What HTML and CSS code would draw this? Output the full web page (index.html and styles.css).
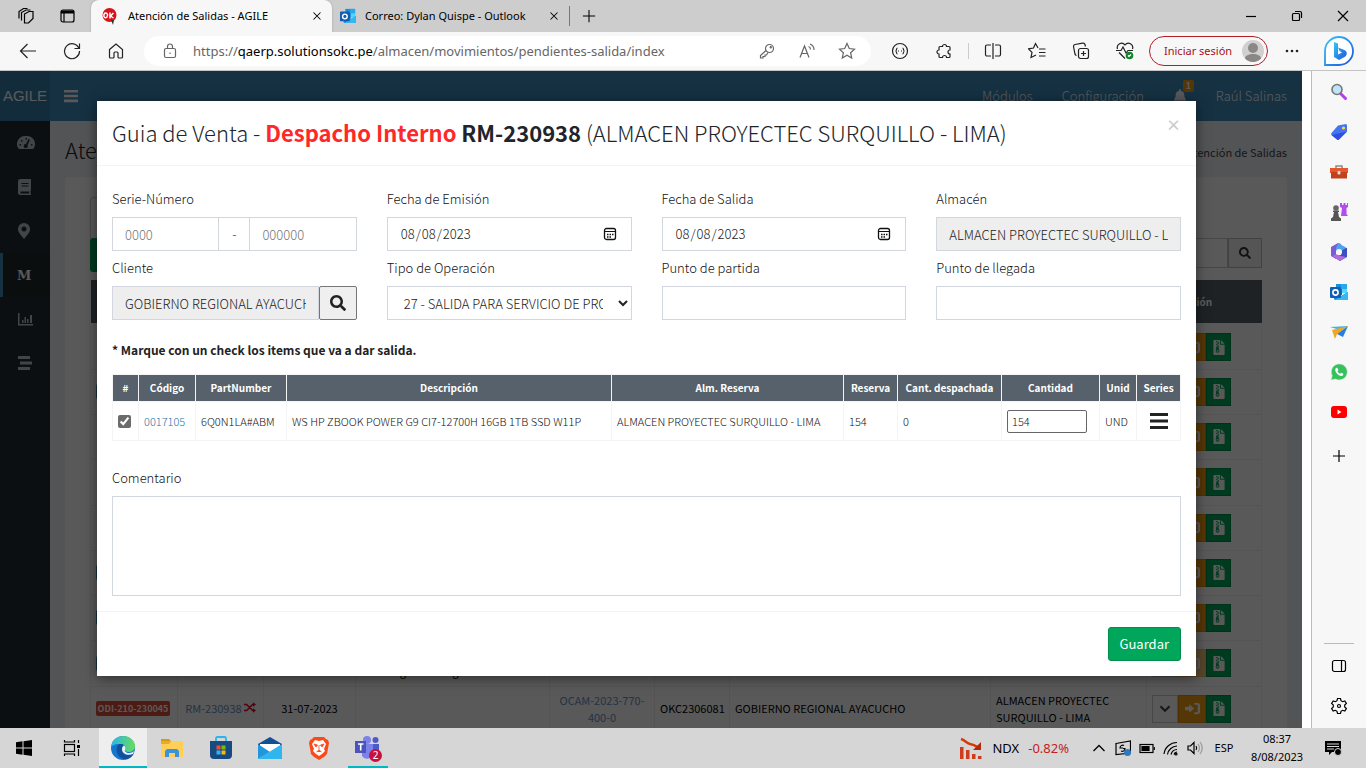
FILE: index.html
```html
<!DOCTYPE html>
<html lang="es">
<head>
<meta charset="utf-8">
<meta name="viewport" content="width=device-width, initial-scale=1">
<title>Atención de Salidas - AGILE</title>
<link rel="stylesheet" href="styles.css">
</head>
<body>
<svg class="defs" aria-hidden="true">
  <symbol id="i-close" viewBox="0 0 16 16"><path d="M4 4l8 8M12 4l-8 8"/></symbol>
  <symbol id="i-plus" viewBox="0 0 16 16"><path d="M8 1v14M1 8h14"/></symbol>
  <symbol id="i-search" viewBox="0 0 512 512"><path d="M505 442.700L405.300 343c-4.500-4.500-10.600-7-17-7H372c27.600-35.300 44-79.700 44-128C416 93.100 322.900 0 208 0S0 93.100 0 208s93.100 208 208 208c48.300 0 92.700-16.400 128-44v16.300c0 6.400 2.500 12.500 7 17l99.700 99.700c9.400 9.400 24.600 9.400 33.900 0l28.300-28.300c9.400-9.400 9.400-24.600.1-34zM208 336c-70.700 0-128-57.200-128-128 0-70.700 57.200-128 128-128 70.700 0 128 57.200 128 128 0 70.700-57.200 128-128 128z"/></symbol>
  <symbol id="i-bars" viewBox="0 0 16 16"><path d="M0 1h16v3H0zM0 6.500h16v3H0zM0 12h16v3H0z"/></symbol>
  <symbol id="i-zip" viewBox="0 0 12 16"><path fill-rule="evenodd" d="M1 0h6v5h5v10a1 1 0 0 1-1 1H1a1 1 0 0 1-1-1V1a1 1 0 0 1 1-1zM8 0l4 4H8zM3 1v1.500h1.500V1zM4.500 2.500V4H6V2.500zM3 4v1.500h1.500V4zM4.500 5.500V7H6V5.500zM3 7v1.500L2.500 11.500a2 2 0 1 0 4 0L5.500 8.500V7zM3.500 11h2v1.200h-2z"/></symbol>
  <symbol id="i-signin" viewBox="0 0 16 14"><path d="M0 5.200h4.500V2.400L9.800 7l-5.300 4.600V8.800H0zM10 1h3.500A2.500 2.500 0 0 1 16 3.500v7a2.500 2.500 0 0 1-2.500 2.500H10v-2h3.500V3H10z"/></symbol>
  <symbol id="i-down" viewBox="0 0 16 16"><path d="M2 5l6 6 6-6" fill="none" stroke="currentColor" stroke-width="2.800"/></symbol>
  <symbol id="i-shuffle" viewBox="0 0 16 14"><path d="M0 3h3.500l8 8H13M0 11h3.500l8-8H13" fill="none" stroke="currentColor" stroke-width="2"/><path d="M12 0l4 3-4 3zM12 8l4 3-4 3z"/></symbol>
  <symbol id="i-outlook" viewBox="0 0 18 18"><path fill="#1490df" d="M6 1h11v9H6z"/><path fill="#28a8ea" d="M11 1h6v5h-6z"/><path fill="#0f6cbd" d="M6 6h6v6H6z"/><path fill="#50d9ff" d="M12 6h5v4h-5z"/><path fill="#1a86d9" d="M4 16V9l7 4 7-4v7a1 1 0 0 1-1 1H5z"/><path fill="#35b8f1" d="M5 17l13-8v7a1 1 0 0 1-1 1z"/><rect width="11" height="11" y="4" rx="1" fill="#0f5fb5"/><circle cx="5.500" cy="9.500" r="2.600" fill="none" stroke="#fff" stroke-width="1.600"/></symbol>
</svg>

<header class="tabs">
  <button class="tabs-tool" aria-label="Áreas de trabajo"><svg class="line s18" viewBox="0 0 18 18"><path d="M7.500 7l4.500-2.500h4v7L11.500 16h-4zM4.500 13.500v-8L9 3h4.500M2 11.500v-7L6.500 1.500h4"/></svg></button>
  <button class="tabs-tool" aria-label="Menú de pestañas"><svg class="line s18" viewBox="0 0 18 18"><rect x="2" y="3" width="13" height="12" rx="2"/><path d="M2 5h13" stroke-width="3"/><path d="M5 6v9"/></svg></button>
  <div class="tab tab-active">
    <svg class="s18" viewBox="0 0 18 18"><circle cx="8.500" cy="8" r="7" fill="#d8121b"/><path d="M10 13l2 5 1-5z" fill="#333"/><path d="M3 9.500c-1-5 4-4 3.500-1S3.500 11 3 9.500zM9 5.500v6M12.500 6L9.500 9l3 2" fill="none" stroke="#fff" stroke-width="1.500"/></svg>
    <span class="tab-title">Atención de Salidas - AGILE</span>
    <button aria-label="Cerrar pestaña"><svg class="line s14"><use href="#i-close"/></svg></button>
  </div>
  <div class="tab">
    <svg class="s16"><use href="#i-outlook"/></svg>
    <span class="tab-title">Correo: Dylan Quispe - Outlook</span>
    <button aria-label="Cerrar pestaña"><svg class="line s14"><use href="#i-close"/></svg></button>
  </div>
  <button class="tab-new" aria-label="Nueva pestaña"><svg class="line s14"><use href="#i-plus"/></svg></button>
  <div class="window-controls">
    <button aria-label="Minimizar"><svg class="line s12" viewBox="0 0 12 12"><path d="M1 6.500h10"/></svg></button>
    <button aria-label="Restaurar"><svg class="line s12" viewBox="0 0 12 12"><rect x="1.500" y="3.500" width="7" height="7" rx="1"/><path d="M4 1.500h5a1.500 1.500 0 0 1 1.500 1.500v5"/></svg></button>
    <button aria-label="Cerrar"><svg class="line s12" viewBox="0 0 12 12"><path d="M1 1l10 10M11 1L1 11"/></svg></button>
  </div>
</header>

<div class="toolbar">
  <button class="tool" aria-label="Atrás"><svg class="line s18" viewBox="0 0 18 18"><path d="M17 9H1.500M8.500 2L1.500 9l7 7"/></svg></button>
  <button class="tool" aria-label="Actualizar"><svg class="line s18" viewBox="0 0 18 18"><path d="M16 6.500A7.500 7.500 0 1 0 16.500 9M16.500 1.500v5h-5"/></svg></button>
  <button class="tool" aria-label="Inicio"><svg class="line s18" viewBox="0 0 18 18"><path d="M2.500 7.500L9 2l6.500 5.500V15a1 1 0 0 1-1 1H12a1 1 0 0 1-1-1v-4a1 1 0 0 0-1-1H8a1 1 0 0 0-1 1v4a1 1 0 0 1-1 1H3.500a1 1 0 0 1-1-1z"/></svg></button>
  <div class="address">
    <svg class="line s16" viewBox="0 0 16 16"><rect x="2.500" y="5.500" width="11" height="9" rx="1.500"/><path d="M5.500 5.500V3.500a2.500 2.500 0 0 1 5 0v2M8 9.500v1.500"/></svg>
    <span class="url">https://<b>qaerp.solutionsokc.pe</b>/almacen/movimientos/pendientes-salida/index</span>
    <button aria-label="Contraseñas"><svg class="line s16" viewBox="0 0 16 16"><circle cx="10.500" cy="5.500" r="4"/><path d="M7 7.500l-5.500 5V15H4v-1.500h2V12h1.500l1.500-2.500"/><circle cx="11.800" cy="4.200" r=".6"/></svg></button>
    <button aria-label="Leer en voz alta"><svg class="line s16" viewBox="0 0 16 16"><path d="M1 14.500L5.500 3 10 14.500M2.500 10.500h6M9.500 3.500c1.500.5 2 2 2 3M11 1c2.500 1 4 3 4 6"/></svg></button>
    <button aria-label="Favorito"><svg class="line s18" viewBox="0 0 18 18"><path d="M9 1.500l2.300 5 5.200.6-3.900 3.600 1.100 5.300L9 13.300 4.300 16l1.100-5.300-3.900-3.600 5.200-.6z"/></svg></button>
  </div>
  <button class="tool" aria-label="Extensión JSON"><svg class="line s18" viewBox="0 0 18 18"><circle cx="9" cy="9" r="7.500"/><path d="M6.500 6C5 6 6 9 4.500 9 6 9 5 12 6.500 12M11.500 6c1.500 0 .5 3 2 3-1.500 0-.5 3-2 3M7 9h1M10 9h1"/></svg></button>
  <button class="tool" aria-label="Extensiones"><svg class="line s18" viewBox="0 0 18 18"><path d="M5 4.500h2.500a2 2 0 1 1 4 0H14a1 1 0 0 1 1 1V8a2 2 0 1 0 0 4v2.500a1 1 0 0 1-1 1h-2.500a2 2 0 1 0-4 0H5a1 1 0 0 1-1-1V12a2 2 0 1 1 0-4V5.500a1 1 0 0 1 1-1z"/></svg></button>
  <span class="tool-sep"></span>
  <button class="tool" aria-label="Pantalla dividida"><svg class="line s18" viewBox="0 0 18 18"><path d="M7 3H3a1.500 1.500 0 0 0-1.500 1.500v8A1.500 1.500 0 0 0 3 14h4M11 3h4a1.500 1.500 0 0 1 1.500 1.500v8A1.500 1.500 0 0 1 15 14h-4M9 1v16"/></svg></button>
  <button class="tool" aria-label="Favoritos"><svg class="line s18" viewBox="0 0 18 18"><path d="M10 6L7.500 1.500 5.500 6l-5 .8 3.500 3.600L3 15.500 8 13M11 7h6.500M11 10.500h6.500M11 14h6.500"/></svg></button>
  <button class="tool" aria-label="Colecciones"><svg class="line s18" viewBox="0 0 18 18"><rect x="6.500" y="6.500" width="10" height="10" rx="2"/><path d="M11.500 9v5M9 11.500h5M4.500 13.500A2 2 0 0 1 3 12L1.500 4.500A2 2 0 0 1 3 2.500l7.500-1.300a2 2 0 0 1 2.500 1.300l.5 2"/></svg></button>
  <button class="tool" aria-label="Rendimiento"><svg class="line s18" viewBox="0 0 18 18"><path d="M1.500 7C0 2.500 6-1 9 3c3-4 9-.5 7.500 4M3 10.500l6 6M0 8.500h5l2-3.500 3 6 2-2.500h5"/><circle cx="13.500" cy="13.500" r="3.800" fill="#13842b" stroke="none"/><path d="M12 13.500l1 1 2-2" stroke="#fff"/></svg></button>
  <button class="signin"><span>Iniciar sesión</span><svg viewBox="0 0 24 24"><circle cx="12" cy="12" r="11" fill="#d2d0ce"/><circle cx="12" cy="9" r="5" fill="#8a8886"/><path d="M4 19.500c0-6 16-6 16 0a11 11 0 0 1-16 0z" fill="#8a8886"/></svg></button>
  <button class="tool" aria-label="Más"><svg class="s18" viewBox="0 0 18 18"><circle cx="4" cy="9" r="1.300"/><circle cx="9" cy="9" r="1.300"/><circle cx="14" cy="9" r="1.300"/></svg></button>
  <button class="bing" aria-label="Bing"><svg viewBox="0 0 32 32"><defs><linearGradient id="g-bing" x1="0" y1="0" x2="1" y2="1"><stop offset="0" stop-color="#35c8f4"/><stop offset="1" stop-color="#1f55dd"/></linearGradient></defs><path d="M2 30V16A14 14 0 1 1 16 30z" fill="#fff" stroke="url(#g-bing)" stroke-width="1.800"/><path d="M11 7l4 1.500v11l4-2-2.500-1.500-1.500-3.500 6.500 2.500c3 1.500 3 5 0 7L16 25l-5-3z" fill="url(#g-bing)"/></svg></button>
</div>

<main class="middle">
  <div class="app">
    <nav class="app-nav">
      <a class="brand" href="#">AGILE</a>
      <button class="menu-toggle" aria-label="Menú"><svg class="s14"><use href="#i-bars"/></svg></button>
      <div class="nav-links">
        <a href="#">Módulos</a>
        <a href="#">Configuración</a>
        <a href="#" class="bell" aria-label="Notificaciones"><svg class="s14" viewBox="0 0 16 16"><path d="M7 1a1 1 0 0 1 2 0v1c3 .5 4 3 4 5.500 0 3 1.500 3.500 2 5.500H1c.5-2 2-2.500 2-5.500C3 5 4 2.500 7 2zM6 14h4a2 2 0 0 1-4 0z"/></svg><span class="badge">1</span></a>
        <a href="#">Raúl Salinas</a>
      </div>
    </nav>
    <div class="app-main">
      <aside class="side">
        <a href="#" aria-label="Tablero"><svg viewBox="0 0 18 16"><path fill-rule="evenodd" d="M9 1a8 8 0 0 1 7.500 12.500c-.3.500-.5.500-1 .5h-13c-.5 0-.7 0-1-.5A8 8 0 0 1 9 1zM8.500 3v1.500H10V3zM4 5v1.500h1.500V5zM2.500 9v1.500H4V9zM14 9v1.500h1.500V9zM11.500 4L9 9a2 2 0 1 0 1.500 1L13 5z"/></svg></a>
        <a href="#" aria-label="Catálogo"><svg viewBox="0 0 18 16"><path fill-rule="evenodd" d="M3 0h11v11l-.5 1v2.500h.5V16H3.500A2.500 2.500 0 0 1 1 13.500v-11A2.500 2.500 0 0 1 3 0zM4.500 4v1h7V4zM4.500 6.500v1h7v-1zM3.500 12.500v2H12v-2z"/></svg></a>
        <a href="#" aria-label="Ubicaciones"><svg viewBox="0 0 18 16"><path fill-rule="evenodd" d="M7 0a6 6 0 0 1 6 6c0 3-2 5-6 10-4-5-6-7-6-10a6 6 0 0 1 6-6zm0 3.500a2.500 2.500 0 1 0 0 5 2.500 2.500 0 0 0 0-5z"/></svg></a>
        <a href="#" class="active">M</a>
        <a href="#" aria-label="Reportes"><svg viewBox="0 0 18 16"><path d="M1 2h1.500v11H16v1.500H1zM5 9h1.500v3H5zM7.500 6H9v6H7.500zM10 8h1.500v4H10zM13 4h2v8h-2z"/></svg></a>
        <a href="#" aria-label="Listado"><svg viewBox="0 0 18 16"><path d="M1 1h12v3H1zM3 6.500h12v3H3zM1 12h12v3H1z"/></svg></a>
      </aside>
      <section class="content">
        <div class="content-head"><h1>Atención de Salidas</h1><span class="crumb">Atención de Salidas</span></div>
        <div class="card">
          <div class="card-tabs"></div>
          <div class="filters"><button class="export" aria-label="Exportar"></button><input type="search" aria-label="Buscar"><button class="find" aria-label="Buscar"><svg class="s12"><use href="#i-search"/></svg></button></div>
          <table class="orders">
            <colgroup><col class="o1"><col class="o2"><col class="o3"><col class="o4"><col class="o5"><col class="o6"><col><col class="o8"><col class="o9"></colgroup>
            <thead><tr><th></th><th></th><th></th><th></th><th></th><th></th><th></th><th></th><th class="action">Acción</th></tr></thead>
            <tbody>
              <tr><td></td><td></td><td></td><td></td><td></td><td></td><td></td><td></td><td><div class="acts"><button aria-label="Ver"><svg><use href="#i-down"/></svg></button><button class="out" aria-label="Salida"><svg><use href="#i-signin"/></svg></button><button class="zip" aria-label="Archivo"><svg><use href="#i-zip"/></svg></button></div></td></tr>
              <tr><td><span class="tag blue"></span></td><td></td><td></td><td></td><td></td><td></td><td></td><td></td><td><div class="acts"><button aria-label="Ver"><svg><use href="#i-down"/></svg></button><button class="out" aria-label="Salida"><svg><use href="#i-signin"/></svg></button><button class="zip" aria-label="Archivo"><svg><use href="#i-zip"/></svg></button></div></td></tr>
              <tr><td></td><td></td><td></td><td></td><td></td><td></td><td></td><td></td><td><div class="acts"><button aria-label="Ver"><svg><use href="#i-down"/></svg></button><button class="out" aria-label="Salida"><svg><use href="#i-signin"/></svg></button><button class="zip" aria-label="Archivo"><svg><use href="#i-zip"/></svg></button></div></td></tr>
              <tr class="tall"><td></td><td></td><td></td><td></td><td></td><td></td><td></td><td></td><td><div class="acts"><button aria-label="Ver"><svg><use href="#i-down"/></svg></button><button class="out" aria-label="Salida"><svg><use href="#i-signin"/></svg></button><button class="zip" aria-label="Archivo"><svg><use href="#i-zip"/></svg></button></div></td></tr>
              <tr><td></td><td></td><td></td><td></td><td></td><td></td><td></td><td></td><td><div class="acts"><button aria-label="Ver"><svg><use href="#i-down"/></svg></button><button class="out" aria-label="Salida"><svg><use href="#i-signin"/></svg></button><button class="zip" aria-label="Archivo"><svg><use href="#i-zip"/></svg></button></div></td></tr>
              <tr><td><span class="tag blue"></span></td><td></td><td></td><td></td><td></td><td></td><td></td><td></td><td><div class="acts"><button aria-label="Ver"><svg><use href="#i-down"/></svg></button><button class="out" aria-label="Salida"><svg><use href="#i-signin"/></svg></button><button class="zip" aria-label="Archivo"><svg><use href="#i-zip"/></svg></button></div></td></tr>
              <tr><td><span class="tag blue"></span></td><td></td><td></td><td></td><td></td><td></td><td></td><td></td><td><div class="acts"><button aria-label="Ver"><svg><use href="#i-down"/></svg></button><button class="out" aria-label="Salida"><svg><use href="#i-signin"/></svg></button><button class="zip" aria-label="Archivo"><svg><use href="#i-zip"/></svg></button></div></td></tr>
              <tr class="tall"><td><span class="tag blue"></span></td><td></td><td></td><td class="mid">Pendiente de<br>general la guía venta</td><td class="mid"><a href="#">OCAM-2023-<br>300424-31-0</a></td><td></td><td></td><td>ALMACEN OKC -<br>LIMA</td><td><div class="acts"><button aria-label="Ver"><svg><use href="#i-down"/></svg></button><button class="out faded" aria-label="Salida"><svg><use href="#i-signin"/></svg></button><button class="zip" aria-label="Archivo"><svg><use href="#i-zip"/></svg></button></div></td></tr>
              <tr><td><span class="tag">ODI-210-230045</span></td><td class="mid"><a href="#">RM-230938</a><svg class="swap"><use href="#i-shuffle"/></svg></td><td class="mid">31-07-2023</td><td></td><td class="mid"><a href="#">OCAM-2023-770-<br>400-0</a></td><td>OKC2306081</td><td>GOBIERNO REGIONAL AYACUCHO</td><td>ALMACEN PROYECTEC<br>SURQUILLO - LIMA</td><td><div class="acts"><button aria-label="Ver"><svg><use href="#i-down"/></svg></button><button class="out" aria-label="Salida"><svg><use href="#i-signin"/></svg></button><button class="zip" aria-label="Archivo"><svg><use href="#i-zip"/></svg></button></div></td></tr>
            </tbody>
          </table>
        </div>
      </section>
    </div>

    <div class="backdrop">
      <form class="modal" role="dialog" aria-labelledby="modal-title">
        <div class="modal-head">
          <h2 id="modal-title">Guia de Venta - <b class="red">Despacho Interno</b> <b>RM-230938</b> (ALMACEN PROYECTEC SURQUILLO - LIMA)</h2>
          <button type="button" class="modal-close" aria-label="Cerrar">×</button>
        </div>
        <div class="modal-body">
          <div class="fields">
            <div class="field"><label for="serie">Serie-Número</label><div class="group"><input id="serie" type="text" placeholder="0000"><span class="addon">-</span><input type="text" placeholder="000000" aria-label="Número"></div></div>
            <div class="field"><label for="emision">Fecha de Emisión</label><input id="emision" type="date" value="2023-08-08"></div>
            <div class="field"><label for="salida">Fecha de Salida</label><input id="salida" type="date" value="2023-08-08"></div>
            <div class="field"><label for="almacen">Almacén</label><input id="almacen" type="text" value="ALMACEN PROYECTEC SURQUILLO - LIMA" readonly></div>
            <div class="field"><label for="cliente">Cliente</label><div class="group"><input id="cliente" type="text" value="GOBIERNO REGIONAL AYACUCHO" readonly><button type="button" class="lookup" aria-label="Buscar cliente"><svg class="s16"><use href="#i-search"/></svg></button></div></div>
            <div class="field"><label for="operacion">Tipo de Operación</label><select id="operacion"><option>27 - SALIDA PARA SERVICIO DE PRODUCCIÓN</option></select></div>
            <div class="field"><label for="partida">Punto de partida</label><input id="partida" type="text"></div>
            <div class="field"><label for="llegada">Punto de llegada</label><input id="llegada" type="text"></div>
          </div>
          <p class="note">* Marque con un check los items que va a dar salida.</p>
          <table class="items">
            <colgroup><col class="c1"><col class="c2"><col class="c3"><col><col class="c5"><col class="c6"><col class="c7"><col class="c8"><col class="c9"><col class="c10"></colgroup>
            <thead><tr><th>#</th><th>Código</th><th>PartNumber</th><th>Descripción</th><th>Alm. Reserva</th><th>Reserva</th><th>Cant. despachada</th><th>Cantidad</th><th>Unid</th><th>Series</th></tr></thead>
            <tbody><tr><td><input type="checkbox" checked aria-label="Seleccionar 0017105"></td><td><a href="#">0017105</a></td><td>6Q0N1LA#ABM</td><td>WS HP ZBOOK POWER G9 CI7-12700H 16GB 1TB SSD W11P</td><td>ALMACEN PROYECTEC SURQUILLO - LIMA</td><td>154</td><td>0</td><td><input type="text" class="qty" value="154" aria-label="Cantidad"></td><td>UND</td><td><button type="button" class="series" aria-label="Series"><svg class="s18" viewBox="0 0 18 16"><path d="M0 0h18v3H0zM0 6.500h18v3H0zM0 13h18v3H0z"/></svg></button></td></tr></tbody>
          </table>
          <div class="field"><label for="comentario">Comentario</label><textarea id="comentario"></textarea></div>
        </div>
        <div class="modal-foot"><button type="button" class="save">Guardar</button></div>
      </form>
    </div>
  </div>

  <aside class="edge-side">
    <button aria-label="Buscar"><svg viewBox="0 0 18 18"><path d="M10.500 10.500l5 5" stroke="#b83df0" stroke-width="3" stroke-linecap="round"/><circle cx="7" cy="6.500" r="5" fill="#bfe3f7" stroke="#777" stroke-width="1.600"/></svg></button>
    <button aria-label="Compras"><svg viewBox="0 0 18 18"><path d="M8 2.500L16 1l1 1v6.500L9 16.500a1.500 1.500 0 0 1-2 0L1.500 12a1.500 1.500 0 0 1 0-2z" fill="#4474f2"/><path d="M17 8.500L9 16.500a1.500 1.500 0 0 1-2 0L1.500 12z" fill="#2e4fe0"/><circle cx="13.500" cy="5" r="1.600" fill="#ffd34d"/></svg></button>
    <button aria-label="Herramientas"><svg viewBox="0 0 18 18"><path d="M6 5V3h6v2" fill="none" stroke="#8a8a8a" stroke-width="1.500"/><path d="M0 5h18v5H0z" fill="#e5582b"/><path d="M1 9h16v6.500H1z" fill="#c2401a"/><rect x="7.500" y="8" width="3" height="3.500" rx="1" fill="#ddd"/></svg></button>
    <button aria-label="Juegos"><svg viewBox="0 0 18 18"><path d="M10 0h2v2h1.500V0h2v2H17V0h1v4l-1.500 1v6l1.500 2h-7l1-8-2-1z" fill="#b04ff0"/><circle cx="6" cy="5" r="2.800" fill="#666"/><path d="M3 7.500h6v1.500H8l1 5 2 1.500V18H1v-2.500L3 14l1-5H3z" fill="#555"/></svg></button>
    <button aria-label="Microsoft 365"><svg viewBox="0 0 18 18"><path d="M8 0L1 4v9l5 3V8l5-3V1z" fill="#7c5bd6"/><path d="M8 0l8 4.500v5L11 7 6 8V5z" fill="#4aa5ee"/><path d="M17 5v9l-7 4-8-5 5-1 4 0V8l5-3z" fill="#3d4fc4"/><path d="M2 13l5-2 4 2 5 1-6 4z" fill="#b06be0"/><circle cx="9" cy="9" r="3" fill="#f7f7f7"/></svg></button>
    <button aria-label="Outlook"><svg><use href="#i-outlook"/></svg></button>
    <button aria-label="Drop"><svg viewBox="0 0 18 18"><path d="M0 4l18-1-8 4z" fill="#38b6f1"/><path d="M2 7l16-4-11 8-2 5z" fill="#f3a51d"/><path d="M7 11l11-8-5 11z" fill="#2680dc"/></svg></button>
    <button aria-label="WhatsApp"><svg viewBox="0 0 18 18"><path d="M1 17l1.200-4.300A8 8 0 1 1 5.500 16z" fill="#35c25a" stroke="#e4e4e4" stroke-width=".6"/><path d="M5.500 5.500l1.500-1 1.500 2.500-1 1.200c.5 1.200 1.500 2 2.500 2.500l1.300-1L13.500 11l-1 1.700C9.500 14 4 9 5.500 5.500z" fill="#fff"/></svg></button>
    <button aria-label="YouTube"><svg viewBox="0 0 18 18"><rect x="1" y="3" width="16" height="12" rx="3" fill="#f00"/><path d="M7.500 6.500v5l4-2.500z" fill="#fff"/></svg></button>
    <button class="edge-add" aria-label="Personalizar"><svg class="line" viewBox="0 0 18 18"><path d="M9 3v12M3 9h12"/></svg></button>
    <div class="edge-bottom">
      <button aria-label="Panel"><svg class="line" viewBox="0 0 18 18"><rect x="2.500" y="3.500" width="13" height="11" rx="2"/><path d="M11.500 3.500v11"/></svg></button>
      <button aria-label="Configuración"><svg class="line" viewBox="0 0 18 18"><path d="M7.500 1.500h3l.5 2.200 1.600 1 2.200-.8 1.600 2.600-1.700 1.500v2l1.700 1.500-1.600 2.600-2.200-.8-1.600 1-.5 2.200h-3L7 14.300l-1.600-1-2.200.8-1.600-2.600L3.300 10V8L1.600 6.500l1.600-2.600 2.200.8 1.600-1z"/><circle cx="9" cy="9" r="1.500"/></svg></button>
    </div>
  </aside>
</main>

<footer class="taskbar">
  <button class="task" aria-label="Inicio"><svg class="s16" viewBox="0 0 16 16"><path d="M0 2.200L6.500 1.300v6.200H0zM7.500 1.200L16 0v7.500H7.500zM0 8.500h6.500v6.200L0 13.800zM7.500 8.500H16V16l-8.500-1.200z"/></svg></button>
  <button class="task" aria-label="Vista de tareas"><svg class="line s18" viewBox="0 0 18 18"><rect x="1.500" y="5.500" width="10" height="7"/><path d="M1.500 1v2h10V1M1.500 17v-2h10v2M15.500 1v3M15.500 10v7"/><path d="M14 6h3v3h-3z" fill="#000" stroke="none"/></svg></button>
  <div class="apps">
    <button class="task open current" aria-label="Edge"><svg class="s24" viewBox="0 0 24 24"><defs><linearGradient id="g-e1" x1="0" x2="1"><stop offset="0" stop-color="#2bb5e8"/><stop offset="1" stop-color="#66dd5a"/></linearGradient></defs><circle cx="12" cy="12" r="12" fill="#1676cf"/><path d="M0 11C1 4 6 0 12 0c7 0 12 5 12 10 0 4-3 6-6 6s-5-1-4-2c2-3-1-6-5-6-4-.500-8 1-9 3z" fill="url(#g-e1)"/><path d="M9 8c-5 1-5 13 4 15 5 1 9-3 10-6-5 4-13 2-12-4 0-2 1-3 2-3.500C12 8 10.500 7.800 9 8z" fill="#11509c"/><path d="M14 14c-1 1 1 3 4 3 2 0 4-1 5-2l-1 3c-5 2-11 0-11-5 0-2 1-3 2-3.500 1.500 1 2 3 1 4.500z" fill="#f0f0f0"/></svg></button>
    <button class="task" aria-label="Explorador"><svg class="s24" viewBox="0 0 24 24"><path d="M1 3h8l2 2H1z" fill="#d9990b"/><path d="M1 5h22v16H1z" fill="#ffcf57"/><path d="M1 5h10l-2 3H1z" fill="#e7ac25"/><path d="M5 21v-6l2-2h10l2 2v6h-4v-4H9v4z" fill="#3b93dc"/></svg></button>
    <button class="task" aria-label="Store"><svg class="s24" viewBox="0 0 24 24"><path d="M7 6V2.500Q7 1 8.500 1h7Q17 1 17 2.500V6" fill="none" stroke="#29b4ee" stroke-width="1.800"/><path d="M1 5h22v14a4 4 0 0 1-4 4H5a4 4 0 0 1-4-4z" fill="#174a80"/><path d="M7.500 9.500h4v4h-4z" fill="#f25022"/><path d="M12.500 9.500h4v4h-4z" fill="#7fba00"/><path d="M7.500 14.500h4v4h-4z" fill="#28b6f6"/><path d="M12.500 14.500h4v4h-4z" fill="#ffb900"/></svg></button>
    <button class="task" aria-label="Correo"><svg class="s24" viewBox="0 0 24 24"><path d="M0 8l12-7 12 7v3H0z" fill="#124f95"/><path d="M2 8h20v9H2z" fill="#fff"/><path d="M0 8l12 8-12 7z" fill="#2196dd"/><path d="M24 8v15H0z" fill="#31b5ef"/></svg></button>
    <button class="task" aria-label="Brave"><svg class="s24" viewBox="0 0 24 24"><path d="M7 1h10l2 2 2 1 1 3-2 11-3 3-5 3-5-3-3-3L2 7l1-3 2-1z" fill="#fb4a1a"/><path d="M8 4l4 1 4-1 3 4-2 5 1 2-3 3-3 2-3-2-3-3 1-2-2-5z" fill="#fff"/><path d="M7 8l3.500 1L9 11zM17 8l-3.500 1 1.500 2zM12 9v5M9.500 16l2.500-2 2.500 2" stroke="#fb4a1a" fill="#fb4a1a" stroke-width=".8"/></svg></button>
    <button class="task open" aria-label="Teams"><svg class="teams" viewBox="0 0 28 26"><circle cx="13" cy="5" r="4" fill="#7b83eb"/><circle cx="21.500" cy="5" r="3" fill="#5059c9"/><path d="M17 9h8v7a5 5 0 0 1-8 4z" fill="#5059c9"/><path d="M8 9h11v9a6 6 0 0 1-11 3z" fill="#7b83eb"/><path d="M1 6h11v12H1z" fill="#4b53bc"/><path d="M4 9h5.500M6.700 9v6.500" stroke="#fff" stroke-width="1.600"/></svg><span class="count">2</span></button>
  </div>
  <div class="tray">
    <button class="stock"><svg class="s24" viewBox="0 0 24 24"><path d="M2 3c4 1 5 4 9 5 4 .5 6 2 9 4" fill="none" stroke="#d83b01" stroke-width="2.500"/><path d="M22 6v8h-8z" fill="#b3290d"/><path d="M1 11h3.500v12H1zM7 14h3.500v9H7zM13 18h3.500v5H13zM19 20h3.500v3H19z" fill="#cf3c1b"/></svg><span>NDX</span><span class="loss">-0.82%</span></button>
    <button aria-label="Iconos ocultos"><svg class="line s16" viewBox="0 0 16 16"><path d="M2.500 11L8 5.500l5.500 5.500" stroke-width="1.300"/></svg></button>
    <button aria-label="Actualización"><svg class="line s16" viewBox="0 0 16 16"><path d="M1 3.500L15.500 1v12L1 14.500zM9 5.500c-2-1-4 .5-4 2.500h3M6 11c2 1 4-.5 4-2.500H8"/><circle cx="12.500" cy="12.500" r="3.500" fill="#2f78c4" stroke="none"/></svg></button>
    <button aria-label="Batería"><svg class="line s16" viewBox="0 0 16 16"><rect x="1" y="4.500" width="13" height="8"/><path d="M3 6.500h7v4H3z" fill="#000"/><path d="M15.300 7v3"/></svg></button>
    <button aria-label="Red"><svg class="line s16" viewBox="0 0 16 16"><path d="M1 14A13 13 0 0 1 14 2.500M4.500 14.500A10 10 0 0 1 14 6M8 14.500a6.500 6.500 0 0 1 6-5M11 14.500a3.500 3.500 0 0 1 3-2.500"/><circle cx="13" cy="14" r="1"/></svg></button>
    <button aria-label="Volumen"><svg class="line s16" viewBox="0 0 16 16"><path d="M1 6h2.500L7 2.500v11L3.500 10H1zM9 6q1.500 2 0 4"/><path d="M11 4q3 4 0 8M13 2q4.500 6 0 12" stroke="#999"/></svg></button>
    <span class="lang">ESP</span>
    <time class="clock">08:37<br>8/08/2023</time>
    <button class="notes" aria-label="Notificaciones"><svg class="s18" viewBox="0 0 18 18"><path d="M1 2h16v11H8l-3 3v-3H1z"/><path d="M3 5h12M3 7.500h12M3 10h7" stroke="#d8d8d8"/><circle cx="14" cy="13" r="3.500" stroke="#d8d8d8"/></svg></button>
  </div>
</footer>
</body>
</html>
```
FILE: styles.css
```css
* { box-sizing: border-box; }
body {
  margin: 0;
  height: 100vh;
  display: flex;
  flex-direction: column;
  overflow: hidden;
  font: 12px/16px "Noto Sans", "Open Sans", sans-serif;
  color: #000;
}
button, input, select, textarea { font: inherit; color: inherit; border-radius: 0; margin: 0; }
button { background: none; border: 0; padding: 0; display: flex; align-items: center; justify-content: center; }
a { color: inherit; text-decoration: none; }
svg { display: block; flex: none; fill: currentColor; }
.defs { position: absolute; width: 0; height: 0; }
.line { fill: none; stroke: currentColor; stroke-width: 1.2; }
.s12 { width: 12px; height: 12px; }
.s14 { width: 14px; height: 14px; }
.s16 { width: 16px; height: 16px; }
.s18 { width: 18px; height: 18px; }
.s24 { width: 24px; height: 24px; }

/* Browser tabs */
.tabs { height: 32px; flex: none; display: flex; background: #cdcdcd; padding-left: 5px; }
.tabs-tool { width: 42px; }
.tab { display: flex; align-items: center; gap: 9px; width: 237px; padding: 0 8px; font-size: 11px; }
.tab-active { width: 241px; margin-left: 2px; padding-left: 10px; background: #f7f7f7; border-radius: 8px 8px 0 0; box-shadow: 0 0 2px #999; }
.tab-title { flex: 1; white-space: nowrap; }
.tab-new { width: 38px; margin: 6px 0; border-left: 1px solid #777; }
.window-controls { margin-left: auto; display: flex; }
.window-controls button { width: 46px; }

/* Address bar */
.toolbar { height: 39px; flex: none; display: flex; align-items: center; padding: 0 2px 0 6px; background: #f7f7f7; border-bottom: 1px solid #c4c4c4; position: relative; z-index: 1; }
.tool { width: 44px; height: 30px; color: #222; }
.tool-sep { width: 1px; height: 16px; margin: 0 2px; background: #ccc; }
.address { flex: 1; height: 30px; margin: 0 7px 0 6px; padding: 0 12px 0 18px; display: flex; align-items: center; gap: 15px; background: #fff; border-radius: 15px; color: #666; }
.address button { width: 25px; }
.url { flex: 1; font-size: 13px; white-space: nowrap; overflow: hidden; }
.url b { color: #000; font-weight: 400; }
.signin { width: 119px; height: 30px; margin: 0 2px; padding: 0 2px 0 14px; justify-content: space-between; border: 1px solid #b01e28; border-radius: 15px; color: #a80f1a; font-size: 11px; white-space: nowrap; }
.signin svg { width: 24px; height: 24px; }
.bing { width: 50px; }
.bing svg { width: 32px; height: 32px; }

/* Page area */
.middle { flex: 1; min-height: 0; display: flex; }
.app { flex: 1; min-width: 0; margin-right: 9px; position: relative; overflow: hidden; display: flex; flex-direction: column; font-family: "Noto Sans CJK JP", "Open Sans", sans-serif; font-size: 12px; line-height: 18px; }
.app-nav { height: 50px; flex: none; display: flex; align-items: center; background: #3c8dbc; color: #fff; }
.brand { width: 50px; height: 50px; background: #367fa9; font: 15px/50px "Liberation Sans", Arial, sans-serif; text-align: center; }
.menu-toggle { width: 42px; height: 50px; }
.nav-links { margin-left: auto; padding-right: 15px; display: flex; align-items: center; gap: 29px; font-size: 13px; font-weight: 300; }
.bell { position: relative; }
.badge { position: absolute; top: -9px; right: -7px; width: 11px; border-radius: 2px; background: #f39c12; font-size: 9px; font-weight: 700; line-height: 12px; text-align: center; }
.app-main { flex: 1; min-height: 0; display: flex; }
.side { width: 50px; flex: none; background: #222d32; color: #b8c7ce; }
.side a { height: 44px; padding-left: 14px; display: flex; align-items: center; border-left: 3px solid transparent; }
.side svg { width: 18px; height: 16px; }
.side .active { background: #1e282c; border-color: #3c8dbc; color: #fff; font: 700 13px "DejaVu Serif", serif; }
.content { flex: 1; min-width: 0; background: #ecf0f5; padding: 0 15px; }
.content-head { height: 56px; display: flex; align-items: center; justify-content: space-between; color: #444; }
.content-head h1 { margin: 0; font-size: 22px; font-weight: 300; color: #222; }
.crumb { padding-top: 6px; font-size: 11px; }
.card { min-height: 600px; padding: 20px 25px; background: #fff; border-radius: 3px; }
.card-tabs { width: 200px; height: 41px; border: 1px solid #ccc; border-bottom: 0; border-radius: 4px 4px 0 0; }
.filters { height: 34px; margin-bottom: 8px; display: flex; align-items: flex-start; }
.export { width: 34px; height: 34px; background: #00a65a; border-radius: 3px; }
.filters input { width: 200px; height: 30px; margin-left: auto; border: 1px solid #ccc; }
.find { width: 34px; height: 30px; border: 1px solid #bbb; background: #f4f4f4; color: #333; }
.orders { width: 100%; table-layout: fixed; border-collapse: collapse; font-size: 11px; line-height: 17px; color: #000; }
.orders th { height: 44px; padding: 0; background: #56616b; background-clip: padding-box; border-bottom: 3px solid #fff; color: #fff; font-size: 10px; font-weight: 700; }
.orders .action { padding-right: 16px; }
.orders td { height: 45px; padding: 0 5px; border: 1px solid #f0f0f0; white-space: nowrap; overflow: hidden; }
.orders .tall td { height: 46px; }
.orders .mid { text-align: center; }
.orders a { color: #6a92c8; }
.o1 { width: 87px; } .o2 { width: 86px; } .o3 { width: 92px; } .o4 { width: 194px; } .o5 { width: 105px; } .o6 { width: 75px; } .o8 { width: 156px; } .o9 { width: 115px; }
.tag { display: block; width: 74px; height: 15px; border-radius: 2px; background: #dd4b39; color: #fff; font-size: 9px; font-weight: 700; line-height: 15px; text-align: center; }
.tag.blue { background: #3c8dbc; }
.swap { display: inline-block; width: 12px; height: 11px; margin-left: 2px; vertical-align: baseline; color: #e00b2a; }
.acts { display: flex; }
.acts button { width: 26px; height: 28px; border: 1px solid #ccc; color: #444; }
.acts svg { width: 12px; height: 15px; }
.acts .out { width: 28px; background: #f39c12; border-color: #e08e0b; color: #fff; }
.acts .out svg { width: 15px; }
.acts .faded { background: #f9c878; border-color: #f0bd6a; }
.acts .zip { width: 25px; background: #00a65a; border-color: #008d4c; color: #fff; }

/* Dispatch dialog */
.backdrop { position: absolute; inset: 0; padding: 30px 106px 0 97px; background: rgba(0, 0, 0, .65); }
.modal { background: #fff; color: #333; box-shadow: 0 2px 12px rgba(0, 0, 0, .5); }
.modal-head { height: 65px; padding: 0 15px 3px; display: flex; align-items: center; justify-content: space-between; border-bottom: 1px solid #f4f4f4; }
.modal-head h2 { margin: 0; font-size: 22px; line-height: 28px; font-weight: 300; color: #212529; white-space: nowrap; }
.modal-head b { font-weight: 700; }
.modal-head .red { color: #ff2828; }
.modal-close { padding-bottom: 14px; font-size: 15px; font-weight: 700; color: #ccc; }
.modal-body { padding: 21px 15px 15px; font-size: 13px; }
.fields { display: grid; grid-template-columns: repeat(4, minmax(0, 1fr)); column-gap: 30px; row-gap: 5px; }
.field { display: flex; flex-direction: column; font-weight: 300; }
.field label { height: 30px; line-height: 24px; color: #111; }
.field input, .field select, .field textarea { width: 100%; min-width: 0; height: 34px; padding: 0 12px; border: 1px solid #d2d6de; background: #fff; color: #222; }
.field input::placeholder { color: #777; }
.field input[readonly] { background: #eee; }
.field input[type="date"]::-webkit-calendar-picker-indicator { width: 14px; height: 14px; padding: 0; margin-right: 2px; background: url("data:image/svg+xml,%3Csvg xmlns='http://www.w3.org/2000/svg' viewBox='0 0 14 14' fill='none' stroke='%23111'%3E%3Crect x='1.500' y='1.500' width='11' height='11' rx='2' stroke-width='1.300'/%3E%3Cpath d='M1 4.500h12'/%3E%3Cpath d='M4 7.500h6.500M4 10h4' stroke-width='1.500' stroke-dasharray='1.500 1'/%3E%3C/svg%3E") center / 14px no-repeat; }
.field textarea { height: 100px; display: block; resize: none; }
.group { display: flex; }
.field .group input { flex: 1; }
.addon { width: 30px; text-align: center; line-height: 32px; border: solid #d2d6de; border-width: 1px 0; }
.lookup { width: 38px; height: 34px; background: #efefef; border: 1px solid #767676; border-radius: 2px; color: #222; }
.note { margin: 21px 0 16px; font-size: 12px; line-height: 17px; font-weight: 700; color: #222; }
.items { width: 100%; table-layout: fixed; margin-bottom: 25px; border-collapse: collapse; font-size: 11px; line-height: 16px; }
.items th, .items td { padding: 0 5px; border: 1px solid #f4f4f4; white-space: nowrap; text-align: left; }
.items th { height: 27px; padding: 0; background: #56616b; color: #fff; font-size: 10px; text-align: center; }
.items td { height: 39px; color: #111; font-weight: 300; }
.items a { color: #1f76aa; }
.items input[type="checkbox"] { width: 13px; height: 13px; display: block; accent-color: #6b6b6b; }
.qty { width: 80px; height: 23px; padding: 0 4px; border: 1px solid #666; border-radius: 2px; background: #fff; }
.series { margin: auto; color: #222; }
.c1 { width: 26px; } .c2 { width: 57px; } .c3 { width: 91px; } .c5 { width: 232px; } .c6 { width: 54px; } .c7 { width: 104px; } .c8 { width: 98px; } .c9 { width: 37px; } .c10 { width: 44px; }
.modal-foot { padding: 15px; display: flex; justify-content: flex-end; border-top: 1px solid #f4f4f4; }
.save { height: 34px; padding: 0 11px; background: #00a65a; border: 1px solid #008d4c; border-radius: 3px; color: #fff; font-size: 13px; font-weight: 400; }

/* Edge sidebar */
.edge-side { width: 55px; flex: none; display: flex; flex-direction: column; padding-top: 1px; background: #f7f7f7; border-left: 1px solid #bbb; }
.edge-side button { width: 100%; height: 40px; }
.edge-side svg { width: 18px; height: 18px; }
.edge-side .edge-add { margin-top: 4px; }
.edge-bottom { margin: auto 12px 2px; border-top: 1px solid #bbb; padding-top: 2px; }

/* Taskbar */
.taskbar { height: 40px; flex: none; display: flex; background: #d6d6d6; }
.task { width: 48px; position: relative; }
.apps { display: flex; gap: 1px; margin-left: 3px; }
.apps .open { box-shadow: inset 0 -2px #00b7c3; }
.apps .current { background: #eee; }
.apps .open:last-child { width: 40px; margin-left: 4px; }
.teams { width: 28px; height: 26px; }
.count { position: absolute; right: 6px; bottom: 6px; width: 13px; height: 13px; border-radius: 50%; background: #c4123b; color: #fff; font-size: 10px; line-height: 13px; }
.tray { margin-left: auto; display: flex; align-items: center; }
.tray button { width: 24px; height: 40px; }
.tray .stock { width: auto; gap: 9px; margin-right: 18px; font-size: 13px; }
.loss { color: #c42020; }
.lang { width: 34px; font-size: 11px; text-align: center; }
.clock { width: 72px; text-align: center; font-size: 11px; line-height: 18px; }
.tray .notes { width: 40px; margin-right: 13px; }
```
